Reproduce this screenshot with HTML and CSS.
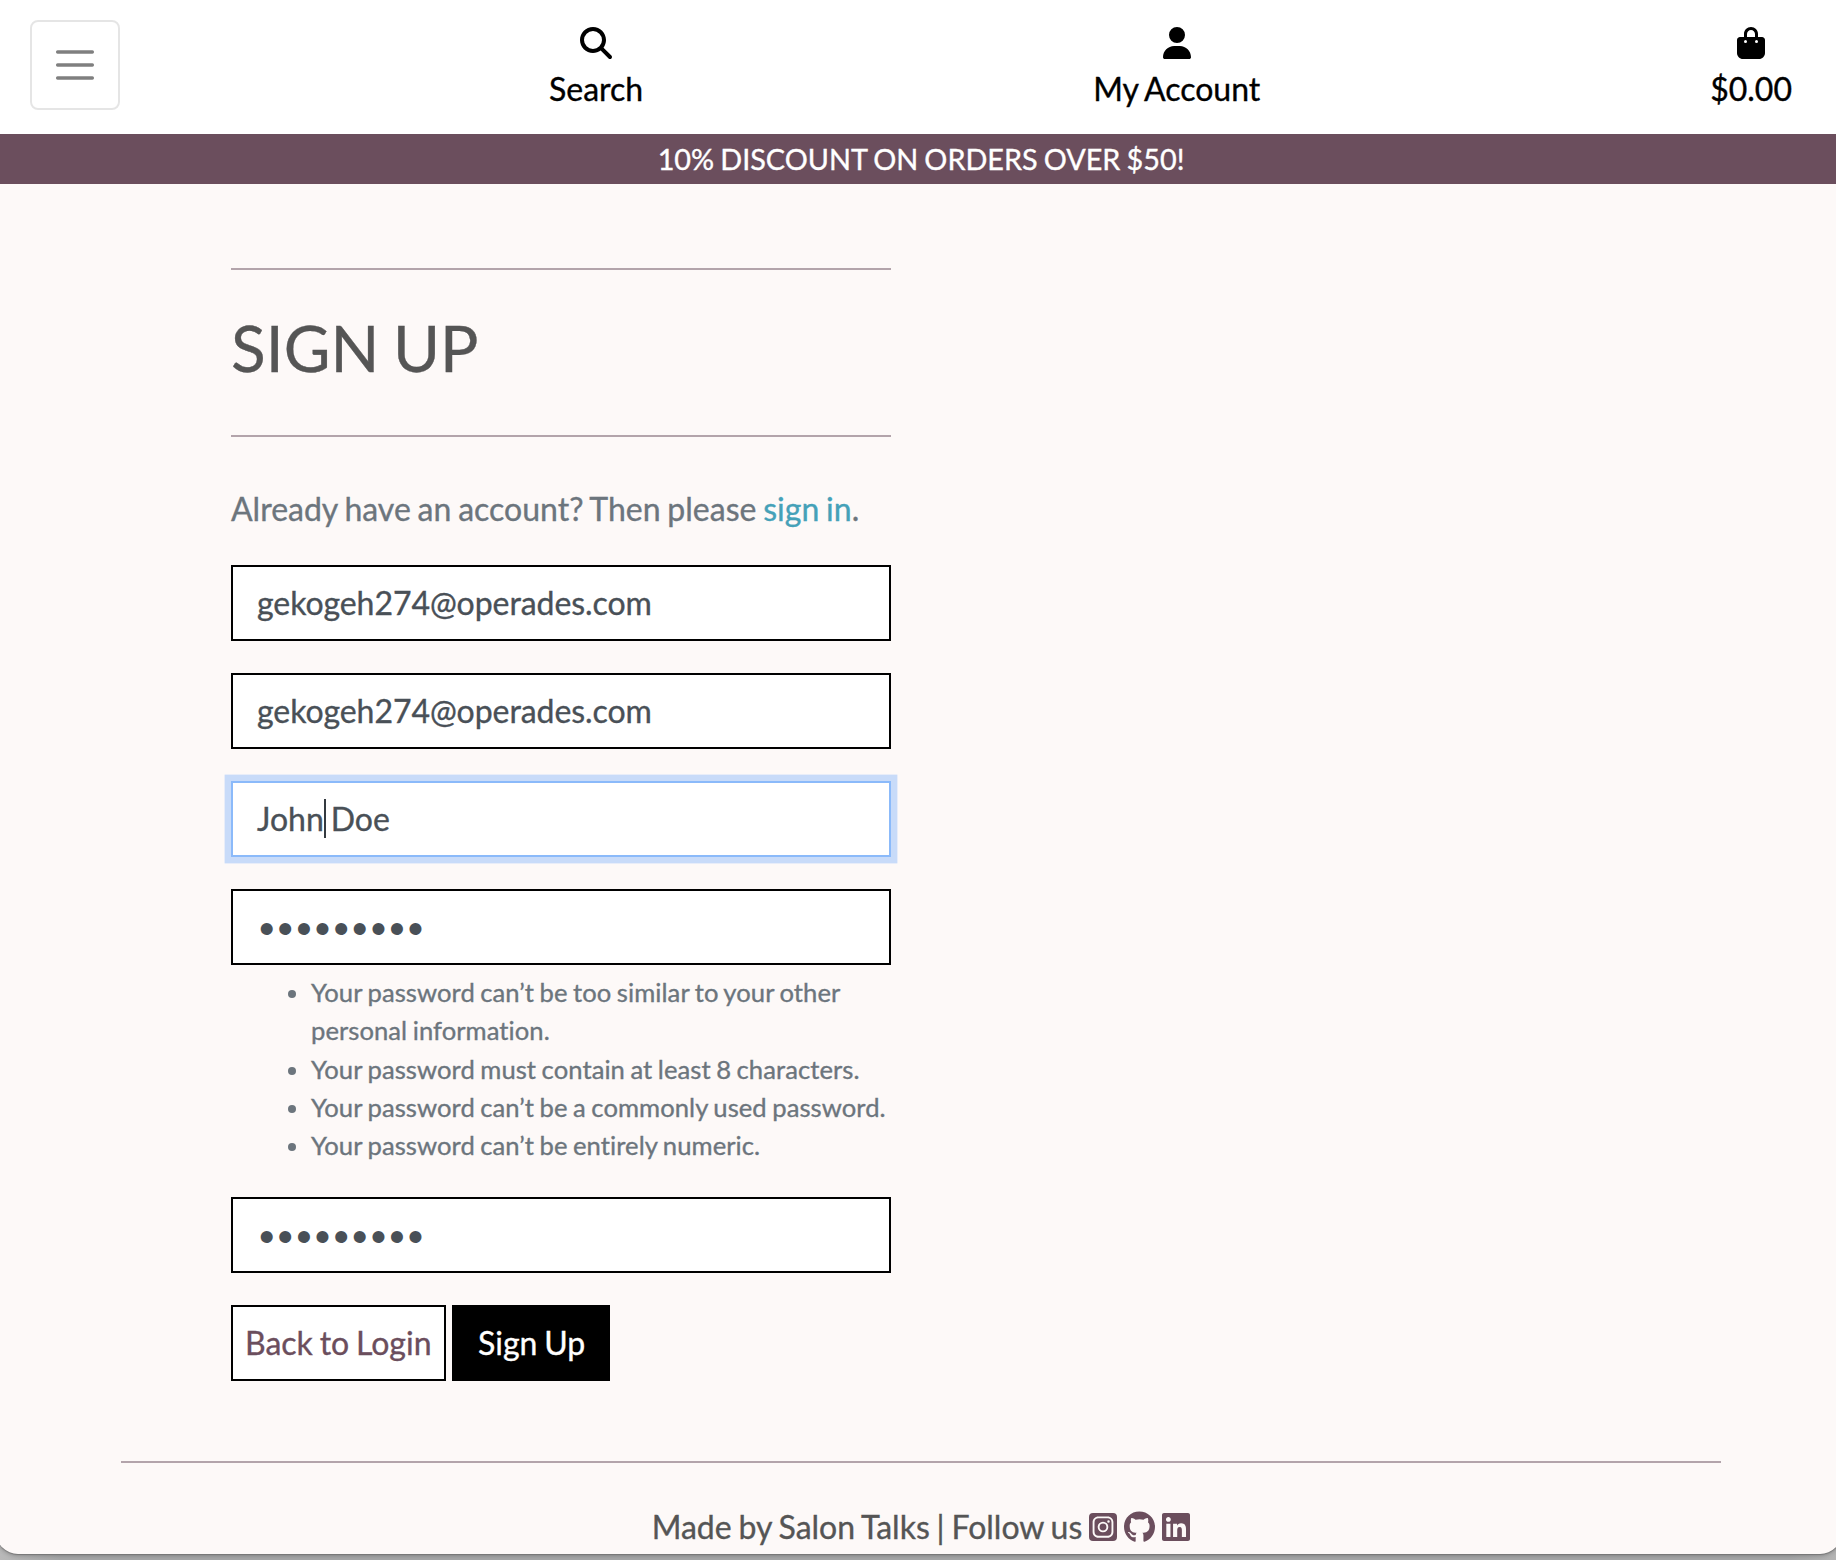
FILE: index.html
```html
<!DOCTYPE html>
<html lang="en">
<head>
<meta charset="utf-8">
<title>Sign Up</title>
<link rel="stylesheet" href="styles.css">
</head>
<body>
<div class="window">
  <header class="navbar">
    <button class="toggler" aria-label="Toggle navigation">
      <svg width="60" height="60" viewBox="0 0 30 30"><path stroke="rgba(0,0,0,.5)" stroke-linecap="round" stroke-miterlimit="10" stroke-width="1.65" d="M6.300 8.500h17.400M6.300 15h17.400M6.300 21.500h17.400"/></svg>
    </button>
    <ul class="nav-links">
      <li><a href="#">
        <svg width="32" height="32" viewBox="0 0 512 512"><path d="M416 208c0 45.900-14.900 88.300-40 122.700L502.600 457.400c12.500 12.500 12.500 32.800 0 45.300s-32.800 12.500-45.300 0L330.700 376c-34.400 25.200-76.800 40-122.700 40C93.100 416 0 322.900 0 208S93.100 0 208 0S416 93.100 416 208zM208 352a144 144 0 1 0 0-288 144 144 0 1 0 0 288z"/></svg>
        <span>Search</span></a></li>
      <li><a href="#">
        <svg width="28" height="32" viewBox="0 0 448 512"><path d="M224 256A128 128 0 1 0 224 0a128 128 0 1 0 0 256zm-45.700 48C79.800 304 0 383.800 0 482.300C0 498.700 13.300 512 29.700 512H418.300c16.400 0 29.700-13.300 29.700-29.700C448 383.800 368.200 304 269.700 304H178.300z"/></svg>
        <span>My Account</span></a></li>
      <li><a href="#">
        <svg width="28" height="32" viewBox="0 0 448 512"><path d="M160 112c0-35.300 28.700-64 64-64s64 28.700 64 64v48H160V112zm-48 48H48c-26.500 0-48 21.500-48 48V416c0 53 43 96 96 96H352c53 0 96-43 96-96V208c0-26.500-21.500-48-48-48H336V112C336 50.100 285.900 0 224 0S112 50.100 112 112v48zm24 48a24 24 0 1 1 0 48 24 24 0 1 1 0-48zm152 24a24 24 0 1 1 48 0 24 24 0 1 1-48 0z"/></svg>
        <span>$0.00</span></a></li>
    </ul>
  </header>
  <div class="banner">10% DISCOUNT ON ORDERS OVER $50!</div>

  <main class="content">
    <hr class="rule">
    <h1 class="title">SIGN UP</h1>
    <hr class="rule">
    <p class="lead">Already have an account? Then please <a href="#">sign in</a>.</p>
    <form class="form">
      <div class="field">gekogeh274@operades.com</div>
      <div class="field">gekogeh274@operades.com</div>
      <div class="field focused">John<i class="caret"></i> Doe</div>
      <div class="field password">•••••••••</div>
      <ul class="help">
        <li>Your password can’t be too similar to your other personal information.</li>
        <li>Your password must contain at least 8 characters.</li>
        <li>Your password can’t be a commonly used password.</li>
        <li>Your password can’t be entirely numeric.</li>
      </ul>
      <div class="field password">•••••••••</div>
      <div class="actions">
        <a class="btn back" href="#">Back to Login</a>
        <a class="btn submit" href="#">Sign Up</a>
      </div>
    </form>
  </main>

  <footer class="footer">
    <hr class="rule">
    <div class="credits">
      <span>Made by Salon Talks | Follow us</span>
      <svg width="28" height="32" viewBox="0 0 448 512"><path fill-rule="evenodd" d="M64 32h320a64 64 0 0 1 64 64v320a64 64 0 0 1-64 64H64a64 64 0 0 1-64-64V96a64 64 0 0 1 64-64zM150 86C98 86 58 126 58 178v156c0 52 40 92 92 92h148c52 0 92-40 92-92V178c0-52-40-92-92-92zM152 116h144c38 0 64 26 64 64v152c0 38-26 64-64 64H152c-38 0-64-26-64-64V180c0-38 26-64 64-64zM224 171a85 85 0 1 0 0 170 85 85 0 1 0 0-170zm0 30a55 55 0 1 1 0 110 55 55 0 1 1 0-110zM312 148a20 20 0 1 0 0 40 20 20 0 1 0 0-40z"/></svg>
      <svg width="31" height="32" viewBox="0 0 496 512"><path fill-rule="evenodd" d="M244.800 8C106.100 8 0 113.300 0 252c0 110.900 69.800 205.800 169.500 239.200 12.800 2.300 17.300-5.600 17.300-12.100 0-6.200-.3-40.400-.3-61.400 0 0-70 15-84.700-29.800 0 0-11.400-29.100-27.800-36.600 0 0-22.900-15.700 1.600-15.400 0 0 24.900 2 38.600 25.800 21.900 38.600 58.600 27.500 72.900 20.900 2.300-16 8.800-27.100 16-33.700-55.900-6.200-112.300-14.300-112.300-110.500 0-27.500 7.600-41.300 23.600-58.900-2.600-6.500-11.100-33.300 2.600-67.900 20.900-6.500 69 27 69 27 20-5.600 41.500-8.500 62.800-8.500s42.800 2.900 62.800 8.500c0 0 48.100-33.600 69-27 13.700 34.700 5.200 61.400 2.600 67.900 16 17.700 25.800 31.500 25.800 58.900 0 96.500-58.900 104.200-114.800 110.500 9.200 7.900 17 22.900 17 46.400 0 33.700-.3 75.400-.3 83.600 0 6.500 4.600 14.400 17.300 12.100C428.200 457.800 496 362.900 496 252 496 113.300 383.500 8 244.800 8z"/></svg>
      <svg width="28" height="32" viewBox="0 0 448 512"><path d="M416 32H31.900C14.300 32 0 46.500 0 64.300v383.400C0 465.500 14.300 480 31.900 480H416c17.600 0 32-14.500 32-32.300V64.300c0-17.800-14.400-32.300-32-32.300zM135.400 416H69V202.200h66.500V416zm-33.200-243c-21.300 0-38.500-17.300-38.500-38.500S80.900 96 102.200 96c21.200 0 38.500 17.300 38.500 38.500 0 21.300-17.200 38.500-38.500 38.500zm282.100 243h-66.400V312c0-24.800-.5-56.700-34.500-56.700-34.600 0-39.900 27-39.900 54.900V416h-66.400V202.200h63.700v29.200h.9c8.900-16.800 30.600-34.500 62.900-34.500 67.200 0 79.700 44.300 79.700 101.900V416z"/></svg>
    </div>
  </footer>
</div>
</body>
</html>
```
FILE: styles.css
```css
* { box-sizing: border-box; }

html, body { margin: 0; height: 1560px; overflow: hidden; }

body {
  background: linear-gradient(to right, #b9b9b9, #a6a7a8 60px, #a6a7a8 1790px, #b4b4b4);
  font-family: Lato, "Liberation Sans", sans-serif;
  font-size: 32px;
  line-height: 48px;
  color: #555;
  font-variant-ligatures: none;
  -webkit-text-stroke: .35px currentColor;
}

/* word-spacing in em is resolved where it is declared, so set it per element */
body, .banner, .title, .help { word-spacing: -.043em; }

a { text-decoration: none; }

.window {
  width: 1846px;
  height: 1554px;
  margin-left: -4px;
  padding-left: 4px;
  background: #fdf9f8;
  border-radius: 0 0 22px 22px;
  box-shadow: 0 1px 1px #777, 0 2px 4px rgba(0, 0, 0, .2);
  overflow: hidden;
}

.navbar {
  display: flex;
  align-items: flex-start;
  height: 134px;
  margin-left: -4px;
  padding: 20px 50px 0 34px;
  background: #fff;
}

.toggler {
  display: flex;
  align-items: center;
  justify-content: center;
  width: 90px;
  height: 90px;
  padding: 0;
  background: none;
  border: 2px solid rgba(0, 0, 0, .1);
  border-radius: 8px;
}

.toggler svg { flex: none; }

.nav-links {
  display: flex;
  flex: 1;
  justify-content: space-between;
  margin: 7px 0 0 429px;
  padding: 0;
  list-style: none;
}

.nav-links a {
  display: flex;
  flex-direction: column;
  align-items: center;
  gap: 6px;
  color: #000;
}

.banner {
  height: 50px;
  margin-left: -4px;
  padding-left: 4px;
  background: #6b4e5d;
  color: #fff;
  font-size: 28.800px;
  line-height: 50px;
  text-align: center;
}

.content {
  width: 660px;
  margin-left: 231px;
  padding-top: 84px;
}

.rule {
  height: 2px;
  margin: 0;
  border: 0;
  background: #b3a4ab;
}

.title {
  margin: 0;
  height: 165px;
  padding-top: 39px;
  font-size: 64px;
  font-weight: 400;
  line-height: 77px;
}

.lead {
  margin: 0;
  padding: 48px 0 32px;
  color: #6c757d;
}

.lead a { color: #45a1b8; }

.form { display: flex; flex-direction: column; gap: 32px; }

.field {
  height: 76px;
  padding: 12px 24px;
  background: #fff;
  border: 2px solid #000;
  color: #495057;
  letter-spacing: -.06px;
  white-space: pre;
}

.field.focused {
  border-color: #8bbafa;
  box-shadow: 0 0 0 6.400px #c8dbf9;
  letter-spacing: 0;
}

.caret {
  display: inline-block;
  width: 2px;
  height: 39px;
  margin-right: -2px;
  background: #343a40;
  vertical-align: -7px;
}

.field.password {
  padding: 14px 26px;
  font-family: "Liberation Sans", sans-serif;
  font-size: 44px;
  letter-spacing: 3.200px;
  -webkit-text-stroke: 0;
}

.help {
  margin: -24px 0 .75px;
  padding: 0 0 0 80px;
  color: #6c757d;
  font-size: 25.600px;
  letter-spacing: .06px;
  line-height: 38.250px;
}

.actions { display: flex; gap: 6px; }

.btn {
  height: 76px;
  padding: 12px;
  border: 2px solid #000;
  white-space: nowrap;
}

.back { width: 215px; background: #fff; color: #6b4e5d; }
.submit { width: 158px; padding: 12px 24px; background: #000; color: #fff; }

.footer { width: 1600px; margin: 80px 0 0 121px; }

.credits {
  display: flex;
  align-items: center;
  justify-content: center;
  gap: 7px;
  padding-top: 40px;
}

.credits svg { fill: #6b4e5d; }
```
